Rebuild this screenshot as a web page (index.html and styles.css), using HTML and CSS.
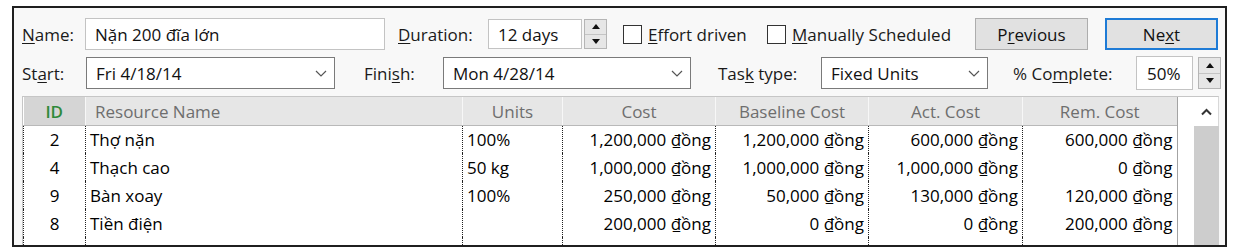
FILE: index.html
```html
<!DOCTYPE html>
<html lang="vi">
<head>
    <meta charset="UTF-8">
    <title>Task Form</title>
    <link rel="stylesheet" href="styles.css">
</head>
<body>
    <div class="dlg">
        <!-- dòng 1 -->
        <div class="row row-top">
            <span class="lbl w-name"><u>N</u>ame:</span>
            <div class="field f-name">Nặn 200 đĩa lớn</div>
            <span class="lbl w-dur"><u>D</u>uration:</span>
            <div class="field f-dur">12 days</div>
            <div class="spin s-dur"><span class="up"></span><span class="down"></span></div>
            <div class="check w-effort"><span class="box"></span><span><u>E</u>ffort driven</span></div>
            <div class="check w-manual"><span class="box"></span><span><u>M</u>anually Scheduled</span></div>
            <div class="btn">P<u>r</u>evious</div>
            <div class="btn btn-default">Ne<u>x</u>t</div>
        </div>
        <!-- dòng 2 -->
        <div class="row row-bottom">
            <span class="lbl w-start">St<u>a</u>rt:</span>
            <div class="combo c-start">Fri 4/18/14
                <svg width="12" height="7" viewBox="0 0 12 7"><polyline points="1,1 6,6 11,1" fill="none" stroke="#555" stroke-width="1.2"/></svg>
            </div>
            <span class="lbl w-finish">Fini<u>s</u>h:</span>
            <div class="combo c-finish">Mon 4/28/14
                <svg width="12" height="7" viewBox="0 0 12 7"><polyline points="1,1 6,6 11,1" fill="none" stroke="#555" stroke-width="1.2"/></svg>
            </div>
            <span class="lbl w-type">Tas<u>k</u> type:</span>
            <div class="combo c-type">Fixed Units
                <svg width="12" height="7" viewBox="0 0 12 7"><polyline points="1,1 6,6 11,1" fill="none" stroke="#555" stroke-width="1.2"/></svg>
            </div>
            <span class="lbl w-pct">% Co<u>m</u>plete:</span>
            <div class="field f-pct">50%</div>
            <div class="spin s-pct"><span class="up"></span><span class="down"></span></div>
        </div>
        <!-- bảng tài nguyên -->
        <div class="grid">
            <table class="res">
                <colgroup>
                    <col style="width:62px">
                    <col style="width:377px">
                    <col style="width:100px">
                    <col style="width:153px">
                    <col style="width:153px">
                    <col style="width:154px">
                    <col style="width:154px">
                </colgroup>
                <thead>
                    <tr>
                        <th class="th-id">ID</th>
                        <th class="th-name">Resource Name</th>
                        <th>Units</th>
                        <th>Cost</th>
                        <th>Baseline Cost</th>
                        <th>Act. Cost</th>
                        <th>Rem. Cost</th>
                    </tr>
                </thead>
                <tbody>
                    <tr>
                        <td class="id">2</td><td>Thợ nặn</td><td>100%</td>
                        <td class="num">1,200,000 ₫ồng</td><td class="num">1,200,000 ₫ồng</td>
                        <td class="num">600,000 ₫ồng</td><td class="num">600,000 ₫ồng</td>
                    </tr>
                    <tr>
                        <td class="id">4</td><td>Thạch cao</td><td>50 kg</td>
                        <td class="num">1,000,000 ₫ồng</td><td class="num">1,000,000 ₫ồng</td>
                        <td class="num">1,000,000 ₫ồng</td><td class="num">0 ₫ồng</td>
                    </tr>
                    <tr>
                        <td class="id">9</td><td>Bàn xoay</td><td>100%</td>
                        <td class="num">250,000 ₫ồng</td><td class="num">50,000 ₫ồng</td>
                        <td class="num">130,000 ₫ồng</td><td class="num">120,000 ₫ồng</td>
                    </tr>
                    <tr>
                        <td class="id">8</td><td>Tiền điện</td><td></td>
                        <td class="num">200,000 ₫ồng</td><td class="num">0 ₫ồng</td>
                        <td class="num">0 ₫ồng</td><td class="num">200,000 ₫ồng</td>
                    </tr>
                    <tr>
                        <td class="id"></td><td></td><td></td><td></td><td></td><td></td><td></td>
                    </tr>
                </tbody>
            </table>
            <div class="gap"></div>
            <div class="vscroll">
                <div class="arrow">
                    <svg width="11" height="8" viewBox="0 0 11 8"><polyline points="1,6.5 5.5,2 10,6.5" fill="none" stroke="#333" stroke-width="2"/></svg>
                </div>
                <div class="thumb"></div>
            </div>
        </div>
    </div>
</body>
</html>
```

FILE: styles.css
```css
* {
    margin: 0;
    padding: 0;
    box-sizing: border-box;
}
body {
    background: #fff;
    font-family: "Open Sans", "Noto Sans", sans-serif;
    font-size: 17px;
    color: #1a1a1a;
}
u {
    text-decoration: underline;
    text-underline-offset: 2px;
}
.dlg {
    margin: 6px 0 0 12px;
    width: 1215px;
    height: 241px;
    border: 2px solid #1f1f1f;
    background: #f8f8f8;
    padding: 9px 0 0 8px;
    overflow: hidden;
}
.row {
    display: flex;
    align-items: center;
}
.row-top {
    height: 34px;
}
.row-bottom {
    height: 36px;
    margin-top: 4px;
}
.lbl {
    flex: none;
    white-space: nowrap;
}
.w-name { width: 63px; }
.w-dur { width: 90px; margin-left: 13px; }
.w-start { width: 64px; }
.w-finish { width: 79px; margin-left: 29px; }
.w-type { width: 103px; margin-left: 27px; }
.w-pct { width: 123px; margin-left: 25px; }

.field, .combo {
    flex: none;
    display: flex;
    align-items: center;
    background: #fff;
    white-space: nowrap;
    color: #111;
}
.field {
    border: 1px solid #c3c3c3;
    padding-left: 9px;
}
.f-name { width: 300px; height: 32px; }
.f-dur { width: 94px; height: 30px; }
.f-pct { width: 57px; height: 34px; padding-left: 10px; }

.combo {
    border: 1px solid #7a7a7a;
    height: 32px;
    padding: 0 7px 0 9px;
    justify-content: space-between;
}
.c-start { width: 249px; }
.c-finish { width: 248px; }
.c-type { width: 167px; }

.spin {
    flex: none;
    width: 23px;
    height: 30px;
    border: 1px solid #b5b5b5;
    background: #e6e6e6;
    display: flex;
    flex-direction: column;
}
.spin span {
    flex: 1;
    display: flex;
    align-items: center;
    justify-content: center;
}
.spin .up {
    border-bottom: 1px solid #c4c4c4;
}
.spin .up::before {
    content: "";
    border-left: 4px solid transparent;
    border-right: 4px solid transparent;
    border-bottom: 5px solid #111;
}
.spin .down::before {
    content: "";
    border-left: 4px solid transparent;
    border-right: 4px solid transparent;
    border-top: 5px solid #111;
}
.s-dur { margin-left: 2px; }
.s-pct { margin-left: 5px; height: 32px; }

.check {
    flex: none;
    display: flex;
    align-items: center;
    white-space: nowrap;
}
.check .box {
    width: 19px;
    height: 19px;
    border: 1px solid #333;
    background: #fff;
    margin-right: 6px;
}
.w-effort { width: 144px; margin-left: 16px; }
.w-manual { width: 208px; }

.btn {
    flex: none;
    width: 113px;
    height: 32px;
    border: 1px solid #adadad;
    background: #e1e1e1;
    display: flex;
    align-items: center;
    justify-content: center;
    color: #111;
}
.btn-default {
    margin-left: 17px;
    border: 2px solid #1e7bd6;
}

.grid {
    display: flex;
    margin-top: 5px;
    width: 1197px;
    height: 156px;
    border: 1px solid #c6c6c6;
    border-right: 1px solid #d8d8d8;
    background: #fff;
}
.res {
    flex: none;
    width: 1153px;
    table-layout: fixed;
    border-collapse: collapse;
}
.res th {
    height: 28px;
    padding-top: 2px;
    background: #e6e6e6;
    color: #6e6e6e;
    font-weight: normal;
    text-align: center;
    border-left: 1px solid #f7f7f7;
    border-bottom: 1px solid #b9b9b9;
    white-space: nowrap;
}
.res th.th-id {
    background: #d5d5d5;
    color: #2f8a3a;
    font-weight: 600;
    border-left: none;
}
.res th.th-name {
    text-align: left;
    padding-left: 9px;
}
.res td {
    height: 28px;
    border-left: 1px dotted #222;
    padding: 0 4px;
    white-space: nowrap;
    color: #000;
}
.res td.id {
    text-align: center;
}
.res td.num {
    text-align: right;
}
.gap {
    flex: none;
    width: 17px;
    border-left: 1px solid #a3a3a3;
}
.vscroll {
    flex: none;
    width: 25px;
    display: flex;
    flex-direction: column;
}
.arrow {
    height: 29px;
    display: flex;
    align-items: center;
    justify-content: center;
}
.thumb {
    flex: 1;
    background: #cdcdcd;
}
```
